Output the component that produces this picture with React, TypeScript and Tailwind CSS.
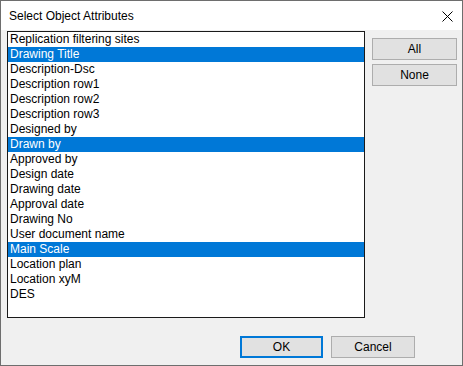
import React from "react";

const items: { label: string; sel?: boolean }[] = [
  { label: "Replication filtering sites" },
  { label: "Drawing Title", sel: true },
  { label: "Description-Dsc" },
  { label: "Description row1" },
  { label: "Description row2" },
  { label: "Description row3" },
  { label: "Designed by" },
  { label: "Drawn by", sel: true },
  { label: "Approved by" },
  { label: "Design date" },
  { label: "Drawing date" },
  { label: "Approval date" },
  { label: "Drawing No" },
  { label: "User document name" },
  { label: "Main Scale", sel: true },
  { label: "Location plan" },
  { label: "Location xyM" },
  { label: "DES" },
];

export default function App() {
  return (
    <div
      className="w-[463px] h-[366px] flex flex-col border border-[#6e6e6e] bg-[#f0f0f0] text-[12px] text-black overflow-hidden"
      style={{ fontFamily: '"Segoe UI", "Liberation Sans", Arial, sans-serif' }}
    >
      <div className="h-[29px] bg-white flex items-center justify-between pl-[8px] pr-[9px] shrink-0">
        <span className="leading-none pt-[1px]">Select Object Attributes</span>
        <svg width="11" height="11" viewBox="0 0 11 11" className="mt-[1px]">
          <path d="M0.5 0.5 L10.5 10.5 M10.5 0.5 L0.5 10.5" stroke="#000" strokeWidth="1" />
        </svg>
      </div>
      <div className="flex-1 flex flex-col pl-[6px] pt-[1px]">
        <div className="flex">
          <div className="w-[358px] h-[287px] border border-[#1a1a1a] bg-white py-0 overflow-hidden">
            {items.map((it) => (
              <div
                key={it.label}
                className={`h-[15px] leading-[15px] pl-[2px] whitespace-nowrap ${
                  it.sel ? "bg-[#0078d7] text-white" : ""
                }`}
              >
                {it.label}
              </div>
            ))}
          </div>
          <div className="flex flex-col gap-[4px] ml-[7px] mt-[7px]">
            <button className="w-[85px] h-[22px] bg-[#e1e1e1] border border-[#adadad] leading-none">All</button>
            <button className="w-[85px] h-[22px] bg-[#e1e1e1] border border-[#adadad] leading-none">None</button>
          </div>
        </div>
        <div className="flex justify-end gap-[8px] mt-[18px] pr-[47px]">
          <button className="w-[83px] h-[22px] bg-[#e1e1e1] border-2 border-[#0078d7] leading-none">OK</button>
          <button className="w-[84px] h-[22px] bg-[#e1e1e1] border border-[#adadad] leading-none">Cancel</button>
        </div>
      </div>
    </div>
  );
}
